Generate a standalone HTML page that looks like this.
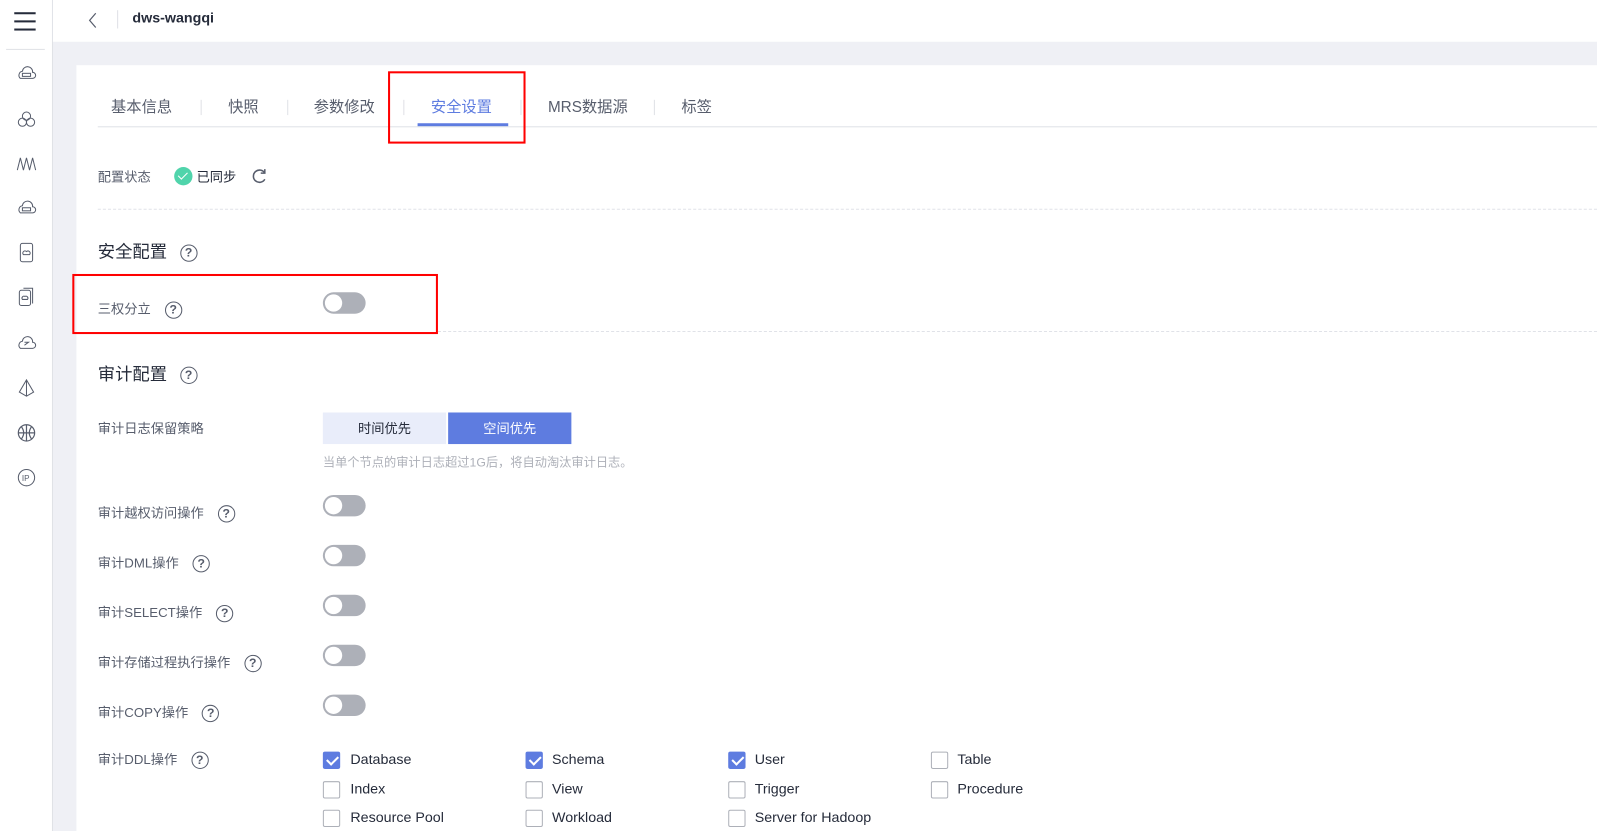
<!DOCTYPE html>
<html><head><meta charset="utf-8">
<style>
*{margin:0;padding:0;box-sizing:border-box}
html,body{width:1597px;height:831px;overflow:hidden}
body{background:#eff0f5;font-family:"Liberation Sans","Noto Sans CJK SC",sans-serif;color:#252b3a;position:relative}
#w{position:absolute;left:0;top:0;width:1568px;height:816px;transform:scale(1.01849);transform-origin:0 0;overflow:hidden}
.a{position:absolute;white-space:nowrap}
.side{position:absolute;left:0;top:0;width:52px;height:816px;background:#fff;border-right:1px solid #dfe1e6}
.top{position:absolute;left:52px;top:0;right:0;height:41px;background:#fff}
.card{position:absolute;left:75px;top:64px;right:0;bottom:0;background:#fff}
.tab{position:absolute;top:94px;font-size:15px;color:#575d6c}
.sep{position:absolute;top:98px;width:1px;height:15px;background:#dfe1e6}
.lbl{position:absolute;font-size:13px;color:#575d6c;white-space:nowrap}
.q{display:inline-block;width:17px;height:17px;border:1.5px solid #575d6c;border-radius:50%;font-size:12px;line-height:14px;text-align:center;color:#575d6c;font-weight:bold;vertical-align:middle}
.tg{position:absolute;left:317px;width:42px;height:21px;border-radius:11px;background:#adb0b8}
.tg:after{content:"";position:absolute;left:2px;top:2px;width:17px;height:17px;border-radius:50%;background:#fff}
.dash{position:absolute;left:96px;right:0;border-top:1px dashed #e0e2e8}
.cb{position:absolute;width:17px;height:17px;border:1px solid #adb0b8;border-radius:2px;background:#fff}
.cb.on{background:#5e7ce0;border-color:#5e7ce0}
.cb.on:after{content:"";position:absolute;left:5px;top:1px;width:5px;height:9px;border:solid #fff;border-width:0 2px 2px 0;transform:rotate(45deg)}
.ct{position:absolute;font-size:14px;color:#252b3a;white-space:nowrap}
.h{position:absolute;font-size:17px;color:#252b3a;white-space:nowrap}
.ic{position:absolute;left:15px;width:22px;height:22px}
</style></head><body>
<div id="w">
<div class="side">
 <div class="a" style="left:14px;top:12px;width:21px;height:2px;background:#252b3a"></div>
 <div class="a" style="left:14px;top:20px;width:21px;height:2px;background:#252b3a"></div>
 <div class="a" style="left:14px;top:28px;width:21px;height:2px;background:#252b3a"></div>
 <div class="a" style="left:6px;top:48px;width:38px;height:1px;background:#dfe1e6"></div>
 <svg class="ic" style="top:62px" viewBox="0 0 22 22" fill="none" stroke="#575d6c" stroke-width="1"><path d="M5 15h12a3 3 0 0 0 0-6 5 5 0 0 0-10-1 4 4 0 0 0-2 7z"/><rect x="7" y="10" width="8" height="3"/></svg>
 <svg class="ic" style="top:106px" viewBox="0 0 22 22" fill="none" stroke="#575d6c" stroke-width="1"><circle cx="11" cy="8" r="4"/><circle cx="7" cy="14" r="4"/><circle cx="15" cy="14" r="4"/></svg>
 <svg class="ic" style="top:150px" viewBox="0 0 22 22" fill="none" stroke="#575d6c" stroke-width="1"><path d="M2 17l3-12 3 12 3-12 3 12 3-12 3 12"/></svg>
 <svg class="ic" style="top:194px" viewBox="0 0 22 22" fill="none" stroke="#575d6c" stroke-width="1"><path d="M5 15h12a3 3 0 0 0 0-6 5 5 0 0 0-10-1 4 4 0 0 0-2 7z"/><rect x="7" y="10" width="8" height="3"/></svg>
 <svg class="ic" style="top:237px" viewBox="0 0 22 22" fill="none" stroke="#575d6c" stroke-width="1"><rect x="5" y="2" width="12" height="18" rx="2"/><path d="M8 13h6a2 2 0 0 0-3-3 2 2 0 0 0-3 3z"/></svg>
 <svg class="ic" style="top:281px" viewBox="0 0 22 22" fill="none" stroke="#575d6c" stroke-width="1"><rect x="4" y="4" width="11" height="15" rx="2"/><path d="M8 2h9v15"/><path d="M7 13h5a2 2 0 0 0-2.5-3 2 2 0 0 0-2.5 3z"/></svg>
 <svg class="ic" style="top:326px" viewBox="0 0 22 22" fill="none" stroke="#575d6c" stroke-width="1"><path d="M5 16h12a3 3 0 0 0 0-6 5 5 0 0 0-10-1 4 4 0 0 0-2 7z"/><path d="M9 13l4-3-4 0"/></svg>
 <svg class="ic" style="top:370px" viewBox="0 0 22 22" fill="none" stroke="#575d6c" stroke-width="1"><path d="M11 3L4 15l7 4 7-4z M11 3v16"/></svg>
 <svg class="ic" style="top:414px" viewBox="0 0 22 22" fill="none" stroke="#575d6c" stroke-width="1.2"><circle cx="11" cy="11" r="8"/><path d="M3 11h16M11 3v16M6 5c3 4 3 8 0 12M16 5c-3 4-3 8 0 12"/></svg>
 <svg class="ic" style="top:458px" viewBox="0 0 22 22" fill="none" stroke="#575d6c" stroke-width="1"><circle cx="11" cy="11" r="8"/><text x="6.5" y="14.5" font-size="8" fill="#575d6c" stroke="none" font-family="Liberation Sans">IP</text></svg>
</div>
<div class="top">
 <svg class="a" style="left:34px;top:12px" width="10" height="16" viewBox="0 0 10 16" fill="none" stroke="#575d6c" stroke-width="1.2"><path d="M8 1L2 8l6 7"/></svg>
 <div class="a" style="left:63px;top:10px;width:1px;height:18px;background:#dfe1e6"></div>
 <div class="a" style="left:78px;top:9px;font-size:14px;font-weight:bold;color:#252b3a">dws-wangqi</div>
</div>
<div class="card"></div>
<div class="tab" style="left:109px">基本信息</div><div class="sep" style="left:197px"></div>
<div class="tab" style="left:224px">快照</div><div class="sep" style="left:282px"></div>
<div class="tab" style="left:308px">参数修改</div><div class="sep" style="left:396px"></div>
<div class="tab" style="left:423px;color:#5e7ce0">安全设置</div><div class="sep" style="left:511px"></div>
<div class="tab" style="left:538px">MRS数据源</div><div class="sep" style="left:642px"></div>
<div class="tab" style="left:669px">标签</div>
<div class="a" style="left:410px;top:121px;width:89px;height:3px;background:#5e7ce0"></div>
<div class="a" style="left:96px;top:124px;right:0;height:1px;background:#dfe1e6"></div>
<div class="a" style="left:381px;top:70px;width:135px;height:71px;border:2px solid #f00"></div>

<div class="lbl" style="left:96px;top:163px">配置状态</div>
<div class="a" style="left:171px;top:164px;width:18px;height:18px;border-radius:50%;background:#50d4ab"></div>
<div class="a" style="left:177px;top:167px;width:5px;height:9px;border:solid #fff;border-width:0 1.5px 1.5px 0;transform:rotate(45deg)"></div>
<div class="a" style="left:193px;top:163px;font-size:13px;color:#252b3a">已同步</div>
<svg class="a" style="left:246px;top:165px" width="17" height="17" viewBox="0 0 17 17" fill="none" stroke="#575d6c" stroke-width="1.5"><path d="M14 5A6 6 0 1 0 14 11"/><path d="M14 1v4h-4"/></svg>
<div class="dash" style="top:205px"></div>

<div class="h" style="left:96px;top:233px">安全配置 <span class="q" style="margin-left:8px">?</span></div>
<div class="lbl" style="left:96px;top:293px">三权分立 <span class="q" style="margin-left:10px">?</span></div>
<div class="tg" style="top:287px"></div>
<div class="a" style="left:71px;top:269px;width:359px;height:59px;border:2px solid #f00"></div>
<div class="dash" style="top:325px;left:430px"></div>

<div class="h" style="left:96px;top:353px">审计配置 <span class="q" style="margin-left:8px">?</span></div>
<div class="lbl" style="left:96px;top:410px">审计日志保留策略</div>
<div class="a" style="left:317px;top:405px;width:121px;height:31px;background:#e9edfa;font-size:13px;text-align:center;line-height:31px;color:#252b3a">时间优先</div>
<div class="a" style="left:440px;top:405px;width:121px;height:31px;background:#5e7ce0;font-size:13px;text-align:center;line-height:31px;color:#fff">空间优先</div>
<div class="lbl" style="left:317px;top:445px;font-size:12px;color:#adb0b8">当单个节点的审计日志超过1G后，将自动淘汰审计日志。</div>

<div class="lbl" style="left:96px;top:493px">审计越权访问操作 <span class="q" style="margin-left:10px">?</span></div><div class="tg" style="top:486px"></div>
<div class="lbl" style="left:96px;top:542px">审计DML操作 <span class="q" style="margin-left:10px">?</span></div><div class="tg" style="top:535px"></div>
<div class="lbl" style="left:96px;top:591px">审计SELECT操作 <span class="q" style="margin-left:10px">?</span></div><div class="tg" style="top:584px"></div>
<div class="lbl" style="left:96px;top:640px">审计存储过程执行操作 <span class="q" style="margin-left:10px">?</span></div><div class="tg" style="top:633px"></div>
<div class="lbl" style="left:96px;top:689px">审计COPY操作 <span class="q" style="margin-left:10px">?</span></div><div class="tg" style="top:682px"></div>
<div class="lbl" style="left:96px;top:735px">审计DDL操作 <span class="q" style="margin-left:10px">?</span></div>

<div class="cb on" style="left:317px;top:738px"></div><div class="ct" style="left:344px;top:737px">Database</div>
<div class="cb on" style="left:516px;top:738px"></div><div class="ct" style="left:542px;top:737px">Schema</div>
<div class="cb on" style="left:715px;top:738px"></div><div class="ct" style="left:741px;top:737px">User</div>
<div class="cb" style="left:914px;top:738px"></div><div class="ct" style="left:940px;top:737px">Table</div>
<div class="cb" style="left:317px;top:767px"></div><div class="ct" style="left:344px;top:766px">Index</div>
<div class="cb" style="left:516px;top:767px"></div><div class="ct" style="left:542px;top:766px">View</div>
<div class="cb" style="left:715px;top:767px"></div><div class="ct" style="left:741px;top:766px">Trigger</div>
<div class="cb" style="left:914px;top:767px"></div><div class="ct" style="left:940px;top:766px">Procedure</div>
<div class="cb" style="left:317px;top:795px"></div><div class="ct" style="left:344px;top:794px">Resource Pool</div>
<div class="cb" style="left:516px;top:795px"></div><div class="ct" style="left:542px;top:794px">Workload</div>
<div class="cb" style="left:715px;top:795px"></div><div class="ct" style="left:741px;top:794px">Server for Hadoop</div>
</div>
</body></html>
